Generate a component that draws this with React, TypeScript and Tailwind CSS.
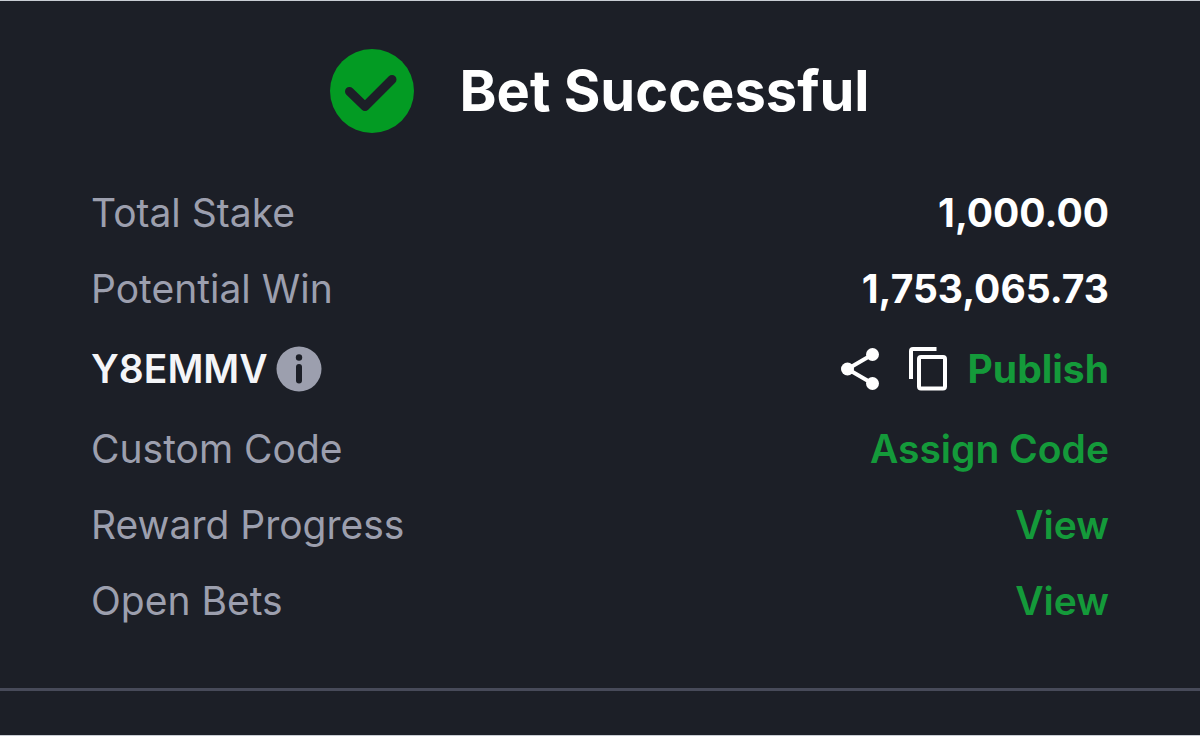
import type { ReactNode } from "react";

interface RowProps {
  label: string;
  children: ReactNode;
}

function Row({ label, children }: RowProps) {
  return (
    <div className="flex h-[76px] items-center justify-between">
      <dt className="font-normal text-[#9c9fae]">{label}</dt>
      <dd className="font-bold text-white">{children}</dd>
    </div>
  );
}

function SuccessIcon() {
  return (
    <svg viewBox="0 0 84 84" className="size-[84px] shrink-0" aria-hidden="true">
      <circle cx="42" cy="42" r="42" fill="#039b23" />
      <path
        d="M19.5 42.5 L35 57.5 L62 30.5"
        fill="none"
        stroke="#1c1f27"
        strokeWidth="9"
        strokeLinecap="round"
        strokeLinejoin="round"
      />
    </svg>
  );
}

function InfoIcon() {
  return (
    <svg viewBox="0 0 46 46" className="size-[46px]" aria-hidden="true">
      <circle cx="23" cy="23" r="22.5" fill="#9c9fae" />
      <circle cx="23" cy="11.5" r="3.2" fill="#1c1f27" />
      <rect x="20" y="18" width="6" height="19.5" rx="3" fill="#1c1f27" />
    </svg>
  );
}

function ShareIcon() {
  return (
    <svg viewBox="0 0 40 44" className="h-11 w-10" aria-hidden="true">
      <path d="M32.5 7.5 L7.5 22 L32.5 36.5" fill="none" stroke="#fff" strokeWidth="4" />
      <circle cx="32.5" cy="7.5" r="6.5" fill="#fff" />
      <circle cx="7.5" cy="22" r="6.5" fill="#fff" />
      <circle cx="32.5" cy="36.5" r="6.5" fill="#fff" />
    </svg>
  );
}

function CopyIcon() {
  return (
    <svg viewBox="0 0 40 44" className="h-11 w-10" aria-hidden="true">
      <path
        d="M28.5 2 H5 Q3 2 3 4 V32"
        fill="none"
        stroke="#fff"
        strokeWidth="4"
      />
      <rect x="11" y="10" width="26" height="31.5" rx="2" fill="none" stroke="#fff" strokeWidth="4" />
    </svg>
  );
}

export default function App() {
  return (
    <main className="min-h-screen border-y border-[#c9cdd4] bg-[#1c1f27] font-['Inter',sans-serif] text-[39px] leading-12">
      <section className="border-b-3 border-[#474a59] px-[91px] pt-12 pb-[49px]">
        <header className="mb-[42px] flex items-center justify-center gap-[45px]">
          <SuccessIcon />
          <h1 className="text-[56px] leading-[84px] font-bold text-white">Bet Successful</h1>
        </header>

        <dl>
          <Row label="Total Stake">1,000.00</Row>
          <Row label="Potential Win">1,753,065.73</Row>

          <div className="flex h-[84px] items-center justify-between">
            <dt className="flex items-center gap-2 font-semibold text-[#f4f5f8]">
              Y8EMMV
              <button type="button" aria-label="About this code">
                <InfoIcon />
              </button>
            </dt>
            <dd className="flex items-center font-bold text-[#149a3a]">
              <button type="button" aria-label="Share" className="mr-7">
                <ShareIcon />
              </button>
              <button type="button" aria-label="Copy" className="mr-5">
                <CopyIcon />
              </button>
              <button type="button">Publish</button>
            </dd>
          </div>

          <Row label="Custom Code">
            <button type="button" className="font-semibold text-[#149a3a]">Assign Code</button>
          </Row>
          <Row label="Reward Progress">
            <a href="#rewards" className="font-semibold text-[#149a3a]">View</a>
          </Row>
          <Row label="Open Bets">
            <a href="#open-bets" className="font-semibold text-[#149a3a]">View</a>
          </Row>
        </dl>
      </section>
    </main>
  );
}
